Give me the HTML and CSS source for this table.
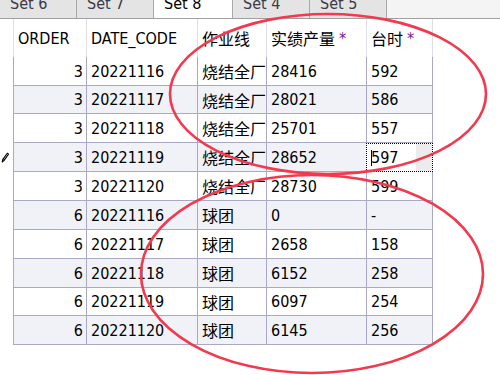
FILE: index.html
```html
<!DOCTYPE html>
<html>
<head>
<meta charset="utf-8">
<link rel="stylesheet" href="styles.css">
</head>
<body>
<div class="page">
  <div class="tabbar">
    <div class="tab">Set 6</div>
    <div class="tab">Set 7</div>
    <div class="tab active">Set 8</div>
    <div class="tab">Set 4</div>
    <div class="tab">Set 5</div>
  </div>
  <div class="grid">
    <div class="row head">
      <div class="rh"></div>
      <div class="c first">ORDER</div>
      <div class="c">DATE_CODE</div>
      <div class="c cjk">作业线</div>
      <div class="c cjk">实绩产量 <span class="req">*</span></div>
      <div class="c cjk">台时 <span class="req">*</span></div>
    </div>
    <div class="row">
      <div class="rh"></div>
      <div class="c first num">3</div><div class="c">20221116</div><div class="c cjk">烧结全厂</div><div class="c">28416</div><div class="c">592</div>
    </div>
    <div class="row alt short">
      <div class="rh"></div>
      <div class="c first num">3</div><div class="c">20221117</div><div class="c cjk">烧结全厂</div><div class="c">28021</div><div class="c">586</div>
    </div>
    <div class="row">
      <div class="rh"></div>
      <div class="c first num">3</div><div class="c">20221118</div><div class="c cjk">烧结全厂</div><div class="c">25701</div><div class="c">557</div>
    </div>
    <div class="row alt">
      <div class="rh"><svg class="pencil" width="8" height="11" viewBox="0 0 8 11"><path d="M1.2 10 L1.8 7.4 L6.3 1.2 L7.6 2.1 L3.1 8.4 Z" fill="#fff" stroke="#000" stroke-width="1.1" stroke-linejoin="round"/><path d="M1.8 7.4 L3.1 8.4" stroke="#000" stroke-width="1"/></svg></div>
      <div class="c first num">3</div><div class="c">20221119</div><div class="c cjk">烧结全厂</div><div class="c">28652</div>
      <div class="c editing"><span class="caret"></span><span class="val">597</span><span class="btn"></span></div>
    </div>
    <div class="row">
      <div class="rh"></div>
      <div class="c first num">3</div><div class="c">20221120</div><div class="c cjk">烧结全厂</div><div class="c">28730</div><div class="c">599</div>
    </div>
    <div class="row alt">
      <div class="rh"></div>
      <div class="c first num">6</div><div class="c">20221116</div><div class="c cjk">球团</div><div class="c">0</div><div class="c">-</div>
    </div>
    <div class="row">
      <div class="rh"></div>
      <div class="c first num">6</div><div class="c">20221117</div><div class="c cjk">球团</div><div class="c">2658</div><div class="c">158</div>
    </div>
    <div class="row alt">
      <div class="rh"></div>
      <div class="c first num">6</div><div class="c">20221118</div><div class="c cjk">球团</div><div class="c">6152</div><div class="c">258</div>
    </div>
    <div class="row short">
      <div class="rh"></div>
      <div class="c first num">6</div><div class="c">20221119</div><div class="c cjk">球团</div><div class="c">6097</div><div class="c">254</div>
    </div>
    <div class="row alt">
      <div class="rh"></div>
      <div class="c first num">6</div><div class="c">20221120</div><div class="c cjk">球团</div><div class="c">6145</div><div class="c">256</div>
    </div>
  </div>
  <svg class="marks" width="500" height="375" viewBox="0 0 500 375">
    <ellipse cx="328" cy="94" rx="158" ry="80" fill="none" stroke="#f2394d" stroke-width="2.6"/>
    <ellipse cx="312" cy="274" rx="171" ry="99" fill="none" stroke="#f2394d" stroke-width="2.6"/>
  </svg>
</div>
</body>
</html>
```
FILE: styles.css
```css
html, body {
  margin: 0;
  padding: 0;
  background: #fff;
}
.page {
  position: relative;
  width: 500px;
  height: 375px;
  overflow: hidden;
  font-family: "DejaVu Sans", Roboto, "Noto Sans CJK SC", sans-serif;
  font-stretch: condensed;
  font-size: 16px;
  color: #000;
}
.tabbar {
  display: flex;
  height: 18px;
  border-bottom: 1px solid #a0a0a0;
  background: #f4f4f4;
  overflow: hidden;
}
.tab {
  width: 66px;
  height: 18px;
  padding-left: 10px;
  border-right: 1px solid #a9a9a9;
  background: #e4e4e4;
  color: #3a3a48;
  line-height: 8px;
}
.tab.active {
  width: 68px;
  background: #fff;
  color: #000;
}
.grid {
  display: flex;
  flex-direction: column;
}
.row {
  display: grid;
  grid-template-columns: 13px 74px 111px 69px 100px 66px;
  height: 29px;
}
.row.short {
  height: 28px;
}
.row.head {
  height: 38px;
}
.rh {
  display: flex;
  align-items: center;
  justify-content: flex-start;
}
.pencil {
  margin-left: 1px;
}
.c {
  box-sizing: border-box;
  border-right: 1px solid #a9a8c6;
  border-bottom: 1px solid #a9a8c6;
  padding-left: 4px;
  display: flex;
  align-items: center;
  white-space: nowrap;
  overflow: hidden;
}
.c.first {
  border-left: 1px solid #a9a8c6;
}
.c.num {
  justify-content: flex-end;
  padding-left: 0;
  padding-right: 3px;
}
.row.alt .c {
  background: #f1f1f8;
}
.row.head .c {
  border-bottom: none;
  border-color: #dedee6;
}
.cjk {
  font-family: "DejaVu Sans", "Noto Sans CJK SC", sans-serif;
}
.req {
  color: #7a1aa0;
  margin-left: 4px;
}
.c.editing {
  position: relative;
  border: 1px dotted #000;
  margin-left: -1px;
  padding-left: 4px;
  background: #fff;
}
.row.alt .c.editing {
  background: #fff;
}
.caret {
  display: block;
  width: 1px;
  height: 16px;
  background: #000;
}
.val {
  margin-left: -1px;
  flex: 1;
}
.btn {
  align-self: stretch;
  width: 16px;
  background: #ececec;
}
.marks {
  position: absolute;
  left: 0;
  top: 0;
  pointer-events: none;
}
```
